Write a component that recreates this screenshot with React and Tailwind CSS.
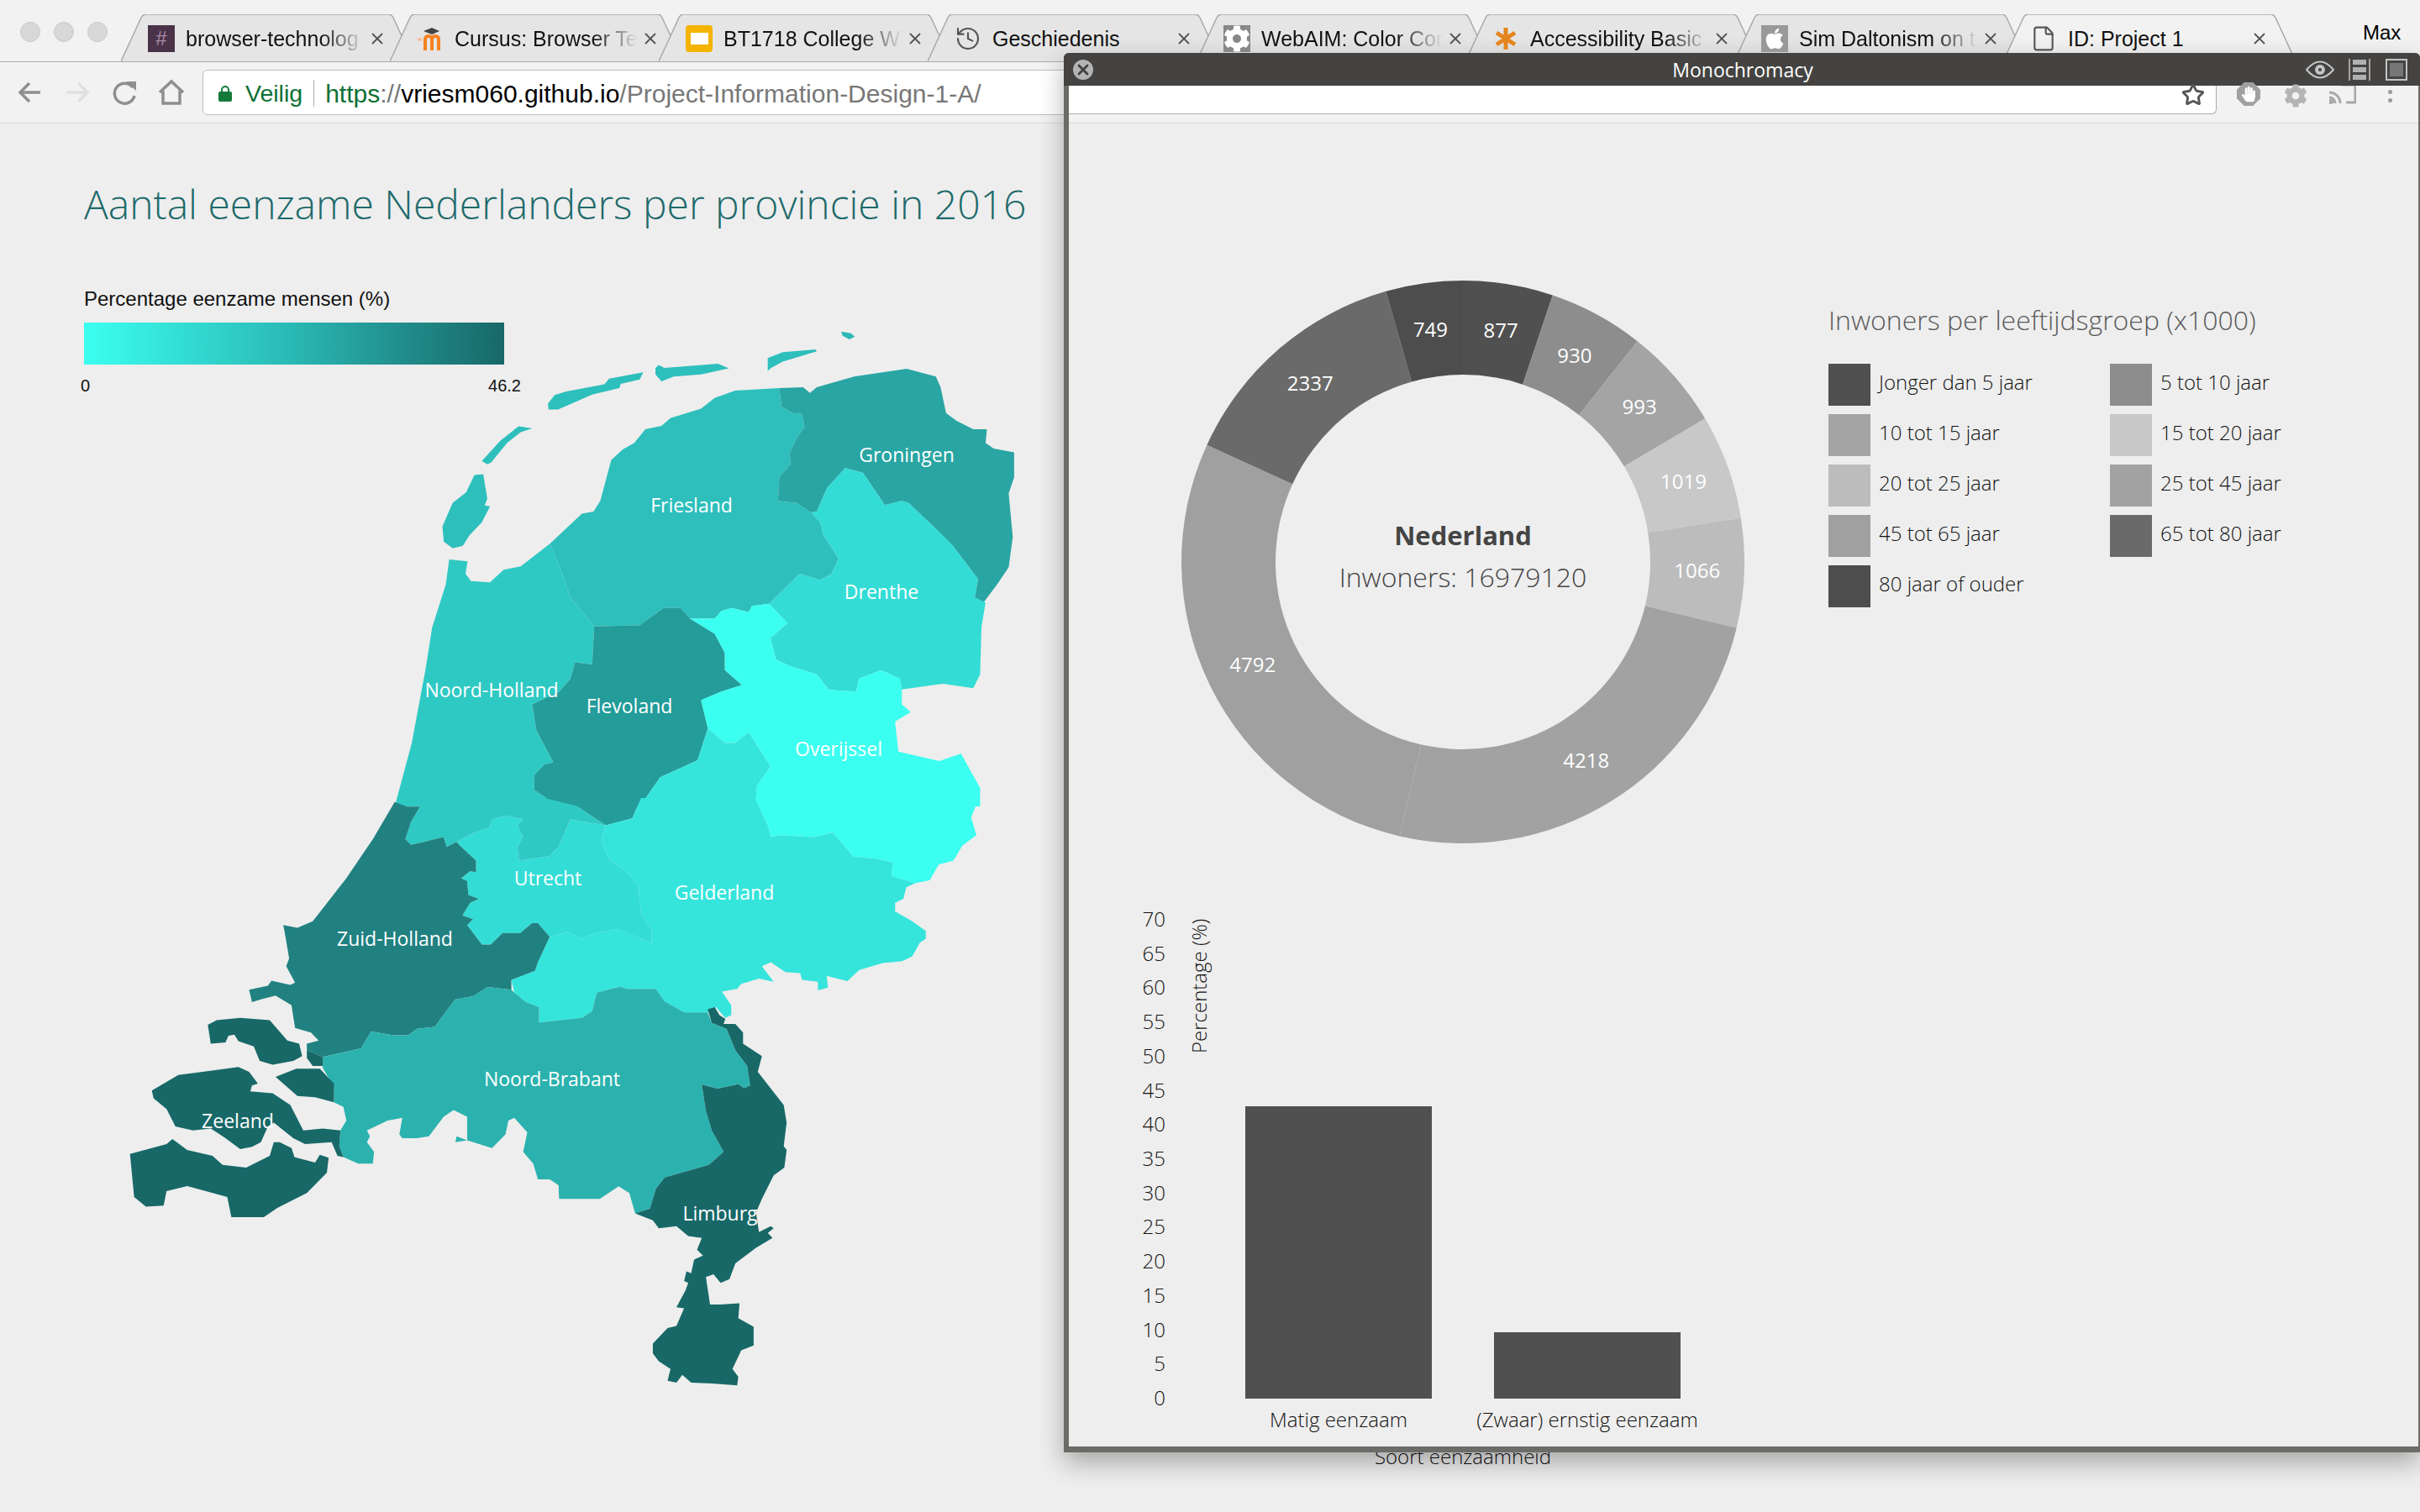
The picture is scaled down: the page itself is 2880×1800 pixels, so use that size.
import { History, File, Star, X } from 'lucide-react';
import { FaApple, FaCog, FaHandPaper } from 'react-icons/fa';

// map outlines, traced per crop: north part (a) and south part (b)
const northShapes = [
  ['#2bb7b4', '1236,460 1250,464 1256,472 1248,478 1238,470'],
  ['#2dbfbc', '1128,522 1150,508 1198,502 1200,506 1150,530 1132,546 1128,552'],
  ['#2dbfbc', '963,545 968,538 976,545 1055,535 1071,546 1030,560 990,565 972,576 963,560'],
  ['#2dbfbc', '805,628 815,608 832,600 888,583 895,570 945,555 940,572 912,582 910,592 870,607 820,642 806,642'],
  ['#2dbfbc', '708,762 735,715 762,681 782,686 765,695 745,720 722,765 716,770'],
  ['#2dbfbc', '697,795 710,793 716,850 712,866 720,868 708,905 690,935 680,960 665,966 652,950 650,915 665,860 685,835'],
  ['#2fc9c4', '660,992 687,996 684,1025 692,1042 720,1045 740,1016 765,1008 808,955 825,1020 838,1080 873,1148 870,1237 845,1232 838,1270 822,1300 782,1330 788,1390 813,1465 800,1470 785,1495 785,1530 810,1556 830,1568 580,1568 605,1420 625,1250 635,1150 655,1050'],
  ['#2ebfbc', '808,955 855,885 872,880 882,855 898,760 915,735 932,720 948,688 972,680 985,662 1030,640 1050,615 1080,598 1145,592 1148,635 1165,650 1178,652 1182,682 1170,710 1160,745 1162,768 1145,800 1143,855 1170,860 1192,882 1205,905 1210,935 1232,990 1222,1025 1205,1040 1175,1025 1130,1095 1105,1100 1100,1115 1075,1105 1060,1112 1050,1130 1014,1130 1000,1105 975,1105 940,1145 873,1148 838,1080 825,1020'],
  ['#29a5a3', '1145,592 1180,590 1190,603 1200,590 1255,565 1332,547 1375,565 1382,590 1390,650 1405,668 1430,688 1450,688 1448,720 1460,733 1490,742 1490,800 1482,838 1488,940 1482,1010 1465,1050 1445,1092 1432,1080 1437,1038 1400,960 1375,920 1335,860 1325,855 1300,865 1268,790 1242,778 1215,825 1200,880 1192,882 1170,860 1143,855 1145,800 1162,768 1160,745 1170,710 1182,682 1178,652 1165,650 1148,635'],
  ['#33dcd5', '1242,778 1268,790 1300,865 1325,855 1335,860 1375,920 1400,960 1437,1038 1432,1080 1448,1092 1442,1150 1440,1260 1430,1292 1385,1282 1325,1295 1322,1270 1295,1250 1262,1270 1258,1300 1218,1296 1200,1260 1160,1240 1140,1225 1132,1175 1157,1140 1130,1095 1175,1025 1205,1040 1222,1025 1232,990 1210,935 1205,905 1192,882 1200,880 1215,825'],
  ['#239c9a', '873,1148 940,1145 975,1105 1000,1105 1014,1130 1050,1165 1065,1210 1065,1250 1090,1285 1060,1300 1030,1320 1040,1385 1025,1460 970,1500 940,1568 835,1568 810,1556 785,1530 785,1495 800,1470 813,1465 788,1390 782,1330 822,1300 838,1270 845,1232 870,1237'],
  ['#3bfff0', '1014,1130 1050,1130 1060,1112 1075,1105 1100,1115 1105,1100 1130,1095 1157,1140 1132,1175 1140,1225 1160,1240 1200,1260 1218,1296 1258,1300 1262,1270 1295,1250 1322,1270 1325,1295 1325,1330 1338,1348 1315,1370 1320,1440 1380,1462 1412,1445 1440,1525 1440,1568 1110,1568 1112,1520 1132,1475 1100,1395 1080,1420 1065,1420 1040,1385 1030,1320 1060,1300 1090,1285 1065,1250 1065,1210 1050,1165'],
  ['#35e5dc', '1040,1385 1065,1420 1080,1420 1100,1395 1132,1475 1112,1520 1110,1568 940,1568 970,1500 1025,1460'],
];

const southShapes = [
  ['#239c9a', '780,0 945,0 930,52 885,70 835,20'],
  ['#3bfff0', '1518,0 1505,50 1514,95 1490,122 1475,160 1450,170 1435,210 1410,218 1370,200 1372,165 1345,155 1305,150 1270,88 1240,100 1180,95 1165,100 1160,70 1138,0'],
  ['#35e5dc', '945,0 1138,0 1160,70 1165,100 1180,95 1240,100 1270,88 1305,150 1345,155 1372,165 1370,200 1410,218 1395,228 1390,258 1376,268 1376,290 1405,315 1428,340 1428,360 1418,370 1405,405 1388,417 1355,422 1315,440 1295,468 1260,455 1262,485 1245,492 1245,470 1218,465 1215,448 1190,445 1165,420 1150,430 1170,470 1145,462 1115,475 1108,488 1082,495 1098,530 1098,555 1088,562 1072,535 1058,548 1018,548 985,520 970,488 920,488 910,482 870,497 862,545 845,562 772,574 772,535 750,522 730,498 725,465 765,442 770,420 790,355 820,342 843,360 870,345 905,335 963,372 963,340 945,295 940,225 925,195 890,155 878,110 885,70 930,52'],
  ['#33ddd6', '632,112 660,90 688,75 692,55 715,45 745,55 735,70 745,100 735,125 738,160 790,148 805,125 825,55 885,70 878,110 890,155 925,195 940,225 945,295 963,340 963,372 905,335 870,345 843,360 820,342 790,355 770,320 760,320 740,345 710,345 690,375 675,375 650,325 660,310 642,300 655,268 670,258 652,248 650,212 640,205 655,187 665,190 665,160 640,125'],
  ['#2fc9c4', '530,0 780,0 835,20 885,70 825,55 805,125 790,148 738,160 735,125 745,100 735,70 745,55 715,45 692,55 688,75 660,90 632,112 615,125 610,100 555,120 545,105 555,60 570,22 548,22'],
  ['#218181', '527,10 548,22 570,22 555,60 545,105 555,120 610,100 615,125 632,112 640,125 665,160 665,190 655,187 640,205 650,212 652,248 670,258 655,268 642,300 660,310 650,325 675,375 690,375 710,345 740,345 760,320 770,320 790,355 770,420 765,442 725,465 725,490 685,483 660,507 630,515 617,540 595,585 565,590 550,607 525,607 487,597 470,640 440,650 405,662 378,645 378,628 398,620 385,600 358,588 352,530 325,505 300,515 285,522 280,490 312,480 318,467 350,478 358,472 343,430 348,410 340,340 338,325 362,332 388,315 445,205 490,105'],
  ['#2bb2ae', '405,662 440,650 470,640 487,597 525,607 550,607 565,590 595,585 617,540 630,515 660,507 685,483 725,490 730,498 750,522 772,535 772,574 845,562 862,545 870,497 910,482 920,488 970,488 985,520 1018,548 1058,548 1065,575 1090,590 1105,645 1125,685 1130,735 1120,742 1110,732 1075,743 1048,733 1055,800 1065,850 1085,905 1060,938 985,970 970,1000 960,1050 935,1062 925,1010 907,993 875,1025 806,1025 805,990 790,975 770,975 762,935 745,905 752,855 730,818 720,825 715,860 692,895 650,875 630,880 632,865 650,875 650,815 627,798 610,815 585,865 565,870 540,870 535,860 540,818 515,825 480,850 485,865 480,880 492,905 490,935 465,935 440,918 433,890 435,850 445,825 440,790 424,778 424,740 405,690'],
  ['#186868', '1058,540 1070,535 1078,555 1088,565 1085,578 1105,578 1118,600 1118,628 1150,660 1143,700 1187,785 1192,830 1187,890 1192,900 1188,945 1170,965 1150,1025 1140,1060 1145,1110 1165,1095 1170,1100 1160,1112 1168,1125 1140,1150 1105,1190 1095,1230 1080,1240 1068,1218 1055,1225 1062,1295 1080,1295 1112,1292 1110,1330 1136,1352 1136,1400 1115,1412 1100,1460 1110,1480 1108,1502 1065,1497 1030,1495 1015,1475 1005,1495 990,1490 995,1460 975,1440 965,1420 965,1395 990,1355 1005,1350 1018,1305 1005,1302 1020,1260 1025,1240 1018,1235 1022,1210 1030,1215 1035,1180 1050,1170 1040,1155 1048,1125 1025,1120 1005,1095 975,1100 965,1080 935,1062 960,1050 970,1000 985,970 1060,938 1085,905 1065,850 1055,800 1048,733 1075,743 1110,732 1120,742 1130,735 1125,685 1105,645 1090,590 1065,575'],
  ['#186868', '210,580 225,568 265,562 315,568 345,620 365,628 370,660 355,672 320,682 298,672 288,635 262,622 255,605 245,608 240,625 215,628'],
  ['#186868', '378,645 405,662 405,685 388,685 378,665'],
  ['#186868', '325,713 360,692 400,692 424,730 424,778 392,765 362,762'],
  ['#186868', '115,748 160,708 262,688 280,700 295,730 285,735 282,750 320,755 350,785 372,850 405,845 435,850 433,890 440,918 430,915 420,880 375,885 355,870 322,830 312,840 300,880 285,892 265,898 240,870 215,845 185,850 155,840 140,795 118,768'],
  ['#186868', '78,910 140,885 150,872 175,900 218,915 235,938 275,945 315,915 322,880 332,880 352,895 357,918 392,932 400,912 415,920 412,958 378,1010 328,1048 305,1072 250,1072 243,1020 175,992 140,1005 135,1042 105,1045 85,1020'],
];

const mapLabels = [
  ['Groningen', 1079, 541],
  ['Friesland', 823, 601],
  ['Drenthe', 1049, 704],
  ['Noord-Holland', 585, 821],
  ['Flevoland', 749, 840],
  ['Overijssel', 998, 891],
  ['Utrecht', 652, 1045],
  ['Gelderland', 862, 1062],
  ['Zuid-Holland', 470, 1117],
  ['Noord-Brabant', 657, 1284],
  ['Zeeland', 283, 1334],
  ['Limburg', 857, 1444],
];

const slices = [
  [877, '#505050'],
  [930, '#8d8d8d'],
  [993, '#a4a4a4'],
  [1019, '#c8c8c8'],
  [1066, '#bcbcbc'],
  [4218, '#a2a2a2'],
  [4792, '#a0a0a0'],
  [2337, '#6a6a6a'],
  [749, '#4d4d4d'],
];

const legendItems = [
  ['Jonger dan 5 jaar', 'bg-[#505050]'],
  ['5 tot 10 jaar', 'bg-[#8d8d8d]'],
  ['10 tot 15 jaar', 'bg-[#a4a4a4]'],
  ['15 tot 20 jaar', 'bg-[#c8c8c8]'],
  ['20 tot 25 jaar', 'bg-[#bcbcbc]'],
  ['25 tot 45 jaar', 'bg-[#a2a2a2]'],
  ['45 tot 65 jaar', 'bg-[#a0a0a0]'],
  ['65 tot 80 jaar', 'bg-[#6a6a6a]'],
  ['80 jaar of ouder', 'bg-[#4d4d4d]'],
];

const ticks = [70, 65, 60, 55, 50, 45, 40, 35, 30, 25, 20, 15, 10, 5, 0];

const MoodleIcon = () => (
  <svg viewBox="0 0 32 32" className="w-8 h-8 shrink-0">
    <path d="M8 7 L18 3 L27 7 L18 11 Z" fill="#444" />
    <path d="M10 30 V17 Q10 13 14 13 Q18 13 18 17 V30 M18 17 Q18 13 22 13 Q26 13 26 17 V30" fill="none" stroke="#f58220" strokeWidth="4" />
    <path d="M1 17 h5" stroke="#f9b98a" strokeWidth="3" />
  </svg>
);

const tabs = [
  {
    title: 'browser-technolog',
    icon: (
      <span className="w-8 h-8 shrink-0 bg-[#4a3349] text-[#a98ba6] text-[24px] leading-8 text-center">#</span>
    ),
  },
  { title: 'Cursus: Browser Te', icon: <MoodleIcon /> },
  {
    title: 'BT1718 College W',
    icon: (
      <span className="w-8 h-8 shrink-0 rounded-[4px] bg-[#f4b400] flex items-center justify-center">
        <span className="w-[21px] h-[14px] bg-white" />
      </span>
    ),
  },
  { title: 'Geschiedenis', icon: <History className="w-8 h-8 shrink-0 text-[#555]" strokeWidth={1.6} />, plain: true },
  {
    title: 'WebAIM: Color Cor',
    icon: (
      <span className="w-8 h-8 shrink-0 bg-[#888] flex items-center justify-center">
        <FaCog className="w-8 h-8 text-white" />
      </span>
    ),
  },
  {
    title: 'Accessibility Basic',
    icon: (
      <svg viewBox="0 0 32 32" className="w-8 h-8 shrink-0">
        <path d="M16 3 V29 M5 9 L27 23 M27 9 L5 23" stroke="#e5851e" strokeWidth="5" />
      </svg>
    ),
  },
  {
    title: 'Sim Daltonism on t',
    icon: (
      <span className="w-8 h-8 shrink-0 bg-[#999] flex items-center justify-center">
        <FaApple className="w-7 h-7 text-white" />
      </span>
    ),
  },
  { title: 'ID: Project 1', icon: <File className="w-8 h-8 shrink-0 text-[#555]" strokeWidth={1.6} />, plain: true, active: true },
];

const Tab = ({ tab }) => (
  <div className="relative w-[348px] h-[56px] -mr-[28px] shrink-0 flex items-start pl-[32px] pr-[32px] pt-[13px]">
    <svg viewBox="0 0 348 57" className="absolute inset-0 w-[348px] h-[57px]">
      <path
        d="M0 56 L24 4 Q26 0 30 0 L318 0 Q322 0 324 4 L348 56"
        fill={tab.active ? '#f2f2f2' : '#e5e5e5'}
        stroke="#a9a9a9"
        strokeWidth="1.5"
      />
    </svg>
    <span className="relative z-10 flex items-center w-full">
      {tab.icon}
      <span
        className={`ml-[13px] flex-1 whitespace-nowrap text-[25px] leading-8 text-[#111] ${
          tab.plain ? '' : '[mask-image:linear-gradient(to_right,black_75%,transparent_100%)]'
        }`}
      >
        {tab.title}
      </span>
      <X className="w-[22px] h-[22px] ml-[4px] shrink-0 text-[#555]" strokeWidth={2} />
    </span>
  </div>
);

const Toolbar = () => (
  <div className="h-[74px] bg-[#f2f2f2] border-t border-[#ababab] border-b border-b-[#dcdcdc] flex items-center pl-[22px]">
    <svg viewBox="0 0 200 32" className="w-[200px] h-8 shrink-0">
      <g fill="none" strokeWidth="3.5">
        <path d="M26 16 H3 M13 5 L2 16 L13 27" stroke="#8f8f8f" />
        <path d="M57 16 H81 M71 5 L82 16 L71 27" stroke="#e0e0e0" />
        <path d="M136 10 A12 12 0 1 0 138 20" stroke="#8f8f8f" />
        <path d="M128 3 L140 3 L140 14 Z" fill="#8f8f8f" />
        <path d="M168 16 L182 3 L196 16 M172 14 V29 H192 V14" stroke="#8f8f8f" />
      </g>
    </svg>
    <div className="ml-[19px] flex-1 h-[54px] bg-white border border-[#bdbdbd] rounded-[6px] flex items-center pl-[18px] pt-[2px] text-[30px] whitespace-nowrap">
      <svg viewBox="0 0 16 20" className="w-4 h-5 shrink-0">
        <path d="M4 9 V6 a4 4 0 0 1 8 0 V9" fill="none" stroke="#157a3c" strokeWidth="2" />
        <rect x="0" y="8" width="16" height="12" rx="2" fill="#157a3c" />
      </svg>
      <span className="ml-4 text-[28.5px] text-[#0b7033]">Veilig</span>
      <span className="mx-[13px] w-px h-8 bg-[#aaa]" />
      <span className="text-[#0b7033]">https</span>
      <span className="text-[#777]">://</span>
      <span className="text-black">vriesm060.github.io</span>
      <span className="text-[#777]">/Project-Information-Design-1-A/</span>
    </div>
  </div>
);

const MapSvg = () => (
  <svg viewBox="0 370 1270 1310" className="w-[1270px] h-[1310px] -ml-[100px] -mt-[101px] shrink-0">
    <g transform="translate(0 160) scale(0.81 0.5102)">
      {northShapes.map(([fill, points]) => (
        <polygon key={points} fill={fill} points={points} />
      ))}
    </g>
    <g transform="translate(100 950) scale(0.7015 0.4656)">
      {southShapes.map(([fill, points]) => (
        <polygon key={points} fill={fill} points={points} />
      ))}
    </g>
    {mapLabels.map(([name, x, y]) => (
      <text key={name} x={x} y={y + 9} textAnchor="middle" fill="white" className="text-[23px]">
        {name}
      </text>
    ))}
  </svg>
);

const Donut = () => {
  const total = slices.reduce((sum, s) => sum + s[0], 0);
  let acc = 0;
  const point = (angle, r) => [335 + r * Math.sin(angle), 335 - r * Math.cos(angle)];
  return (
    <svg viewBox="0 0 670 670" className="w-[670px] h-[670px] shrink-0">
      {slices.map(([value, fill]) => {
        const start = (acc / total) * Math.PI * 2;
        acc += value;
        const end = (acc / total) * Math.PI * 2;
        const large = end - start > Math.PI ? 1 : 0;
        const [x1, y1] = point(start, 335);
        const [x2, y2] = point(end, 335);
        const [x3, y3] = point(end, 223);
        const [x4, y4] = point(start, 223);
        const [lx, ly] = point((start + end) / 2, 279);
        return (
          <g key={value}>
            <path
              d={`M${x1} ${y1} A335 335 0 ${large} 1 ${x2} ${y2} L${x3} ${y3} A223 223 0 ${large} 0 ${x4} ${y4} Z`}
              fill={fill}
            />
            <text x={lx} y={ly + 8} textAnchor="middle" fill="white" className="text-[24px]">
              {value}
            </text>
          </g>
        );
      })}
      <text x="335" y="315" textAnchor="middle" fill="#444" className="text-[31px] font-bold">
        Nederland
      </text>
      <text x="335" y="365" textAnchor="middle" fill="#444" className="text-[32px] font-light">
        Inwoners: 16979120
      </text>
    </svg>
  );
};

const BarChart = () => (
  <svg viewBox="1340 1070 700 640" className="w-[700px] h-[640px] ml-[68px] mt-[67px] shrink-0">
    {ticks.map((t) => (
      <text
        key={t}
        x="1387"
        y={1664 - t * 8.143 + 8}
        textAnchor="end"
        fill="#111"
        className="text-[24px] font-light"
      >
        {t}
      </text>
    ))}
    <text transform="translate(1436 1253) rotate(-90)" fill="#111" className="text-[24px] font-light">
      Percentage (%)
    </text>
    <rect x="1482" y="1316" width="222" height="348" fill="#505050" />
    <rect x="1778" y="1585" width="222" height="79" fill="#505050" />
    <text x="1593" y="1698" textAnchor="middle" fill="#111" className="text-[24px] font-light">
      Matig eenzaam
    </text>
    <text x="1889" y="1698" textAnchor="middle" fill="#111" className="text-[24px] font-light">
      (Zwaar) ernstig eenzaam
    </text>
  </svg>
);

const SimulatorWindow = () => (
  <div className="absolute left-[1266px] top-[63px] w-[1614px] h-[1666px] flex flex-col rounded-t-[6px] border-l-[6px] border-r-[2px] border-b-[7px] border-[#6b6b68] border-t-0 shadow-[0_12px_30px_rgba(0,0,0,0.3)] bg-[#eeeeee]">
    <div className="-ml-[6px] -mr-[2px] h-[39px] shrink-0 rounded-t-[6px] bg-[#444341] grid grid-cols-[1fr_auto_1fr] items-center pl-[11px] pr-[15px]">
      <span className="w-6 h-6 rounded-full bg-[#b4b4b4] flex items-center justify-center">
        <X className="w-5 h-5 text-[#444]" strokeWidth={3.5} />
      </span>
      <span className="ml-[6px] pt-[2px] text-center text-white text-[23px] leading-none">Monochromacy</span>
      <span className="flex items-center justify-end">
        <svg viewBox="0 0 34 22" className="w-[34px] h-[22px]">
          <path d="M1 11 Q17 -8 33 11 Q17 30 1 11 Z" fill="none" stroke="#c4c4c4" strokeWidth="2" />
          <circle cx="17" cy="11" r="6" fill="#c4c4c4" />
          <circle cx="17" cy="11" r="2" fill="#444341" />
        </svg>
        <svg viewBox="0 0 26 26" className="w-[26px] h-[26px] ml-[17px]">
          <path d="M1 0 V26 M25 0 V26" stroke="#c4c4c4" strokeWidth="1.5" />
          <rect x="5" y="1" width="16" height="6" fill="#b0b0b0" />
          <rect x="5" y="10" width="16" height="6" fill="#b0b0b0" />
          <rect x="5" y="19" width="16" height="6" fill="#b0b0b0" />
        </svg>
        <span className="w-[26px] h-[26px] ml-[18px] border-2 border-[#c4c4c4] p-[3px]">
          <span className="block w-full h-full bg-[#777]" />
        </span>
      </span>
    </div>
    <div className="h-[45px] shrink-0 bg-[#f2f2f2] border-b border-[#dcdcdc] flex items-start">
      <div className="w-[1366px] h-[34px] bg-white border-b border-r border-[#adadad] rounded-br-[6px] flex justify-end items-start pr-[13px]">
        <Star className="w-[28px] h-[28px] -mt-[3px] text-[#555]" strokeWidth={2.5} />
      </div>
      <svg viewBox="0 0 32 32" className="w-[28px] h-[28px] ml-[24px] shrink-0 -mt-[4px]">
        <path d="M10 0 H22 L32 10 V22 L22 32 H10 L0 22 V10 Z" fill="#a0a0a0" />
      </svg>
      <FaHandPaper className="w-[16px] h-[20px] -ml-[22px] shrink-0 text-white" />
      <FaCog className="w-[30px] h-[28px] ml-[33px] shrink-0 -mt-[2px] text-[#b4b4b4]" />
      <svg viewBox="0 0 32 22" className="w-[32px] h-[22px] ml-[25px] shrink-0">
        <path d="M14 0 H31 V21 H20" fill="none" stroke="#a8a8a8" strokeWidth="3" transform="translate(0 -1)" />
        <path d="M0 8 A13 13 0 0 1 13 21 M0 14 A7 7 0 0 1 7 21" fill="none" stroke="#a8a8a8" strokeWidth="3" />
        <circle cx="2" cy="19" r="3" fill="#a8a8a8" />
      </svg>
      <span className="ml-[38px] shrink-0 flex flex-col gap-[5px] pt-[5px]">
        <span className="w-[5px] h-[5px] rounded-full bg-[#999]" />
        <span className="w-[5px] h-[5px] rounded-full bg-[#999]" />
      </span>
    </div>
    <div className="flex-1 overflow-hidden bg-[#eeeeee]">
      <div className="flex items-start pl-[134px] pt-[187px]">
        <Donut />
        <div className="ml-[100px] mt-[25px] font-light">
          <h2 className="text-[32px] leading-[44px] text-[#5a5a5a] whitespace-nowrap">Inwoners per leeftijdsgroep (x1000)</h2>
          <div className="mt-[30px] grid grid-cols-[335px_auto] gap-y-[10px]">
            {legendItems.map(([label, bg]) => (
              <div key={label} className="flex items-start gap-[10px]">
                <span className={`w-[50px] h-[50px] shrink-0 ${bg}`} />
                <span className="text-[24px] leading-[44px] text-[#111] whitespace-nowrap">{label}</span>
              </div>
            ))}
          </div>
        </div>
      </div>
      <BarChart />
    </div>
  </div>
);

export default function App() {
  return (
    <div className="relative w-[2880px] h-[1800px] overflow-hidden bg-[#eeeeee] [font-family:'Open_Sans',sans-serif]">
      <div className="[font-family:'Liberation_Sans',Arial,sans-serif]">
        {/* Tab strip */}
        <div className="h-[73px] bg-[#f2f2f2] flex items-start">
          <div className="w-[144px] shrink-0 flex gap-[16px] pl-[24px] pt-[26px]">
            <span className="w-6 h-6 rounded-full bg-[#d8d8d8] border border-[#c9c9c9]" />
            <span className="w-6 h-6 rounded-full bg-[#d8d8d8] border border-[#c9c9c9]" />
            <span className="w-6 h-6 rounded-full bg-[#d8d8d8] border border-[#c9c9c9]" />
          </div>
          <div className="flex pt-[17px]">
            {tabs.map((tab) => (
              <Tab key={tab.title} tab={tab} />
            ))}
          </div>
          <span className="ml-[108px] mt-[25px] text-[24px] leading-7 text-black">Max</span>
        </div>
        <Toolbar />
      </div>

      {/* Page underneath the simulator window */}
      <div className="flex h-[1653px]">
        <div className="w-[1266px] shrink-0 pl-[100px] pt-[72px] flex flex-col">
          <h1 className="text-[48px] leading-none font-light text-[#1e6a6b] whitespace-nowrap">
            Aantal eenzame Nederlanders per provincie in 2016
          </h1>
          <div className="[font-family:'Liberation_Sans',Arial,sans-serif] text-[#111]">
            <p className="mt-[74px] text-[24px] leading-[30px]">Percentage eenzame mensen (%)</p>
            <div className="mt-[13px] w-[500px] h-[50px] bg-gradient-to-r from-[#3bfff0] via-[#2ab8b4] to-[#186868]" />
            <div className="mt-[13px] w-[524px] -ml-[4px] flex justify-between text-[20px] leading-6">
              <span>0</span>
              <span>46.2</span>
            </div>
          </div>
          <MapSvg />
        </div>
        <div className="w-[950px] shrink-0 flex items-end justify-center pb-[48px] text-[24px] font-light text-[#111]">
          Soort eenzaamheid
        </div>
      </div>

      <SimulatorWindow />
    </div>
  );
}
